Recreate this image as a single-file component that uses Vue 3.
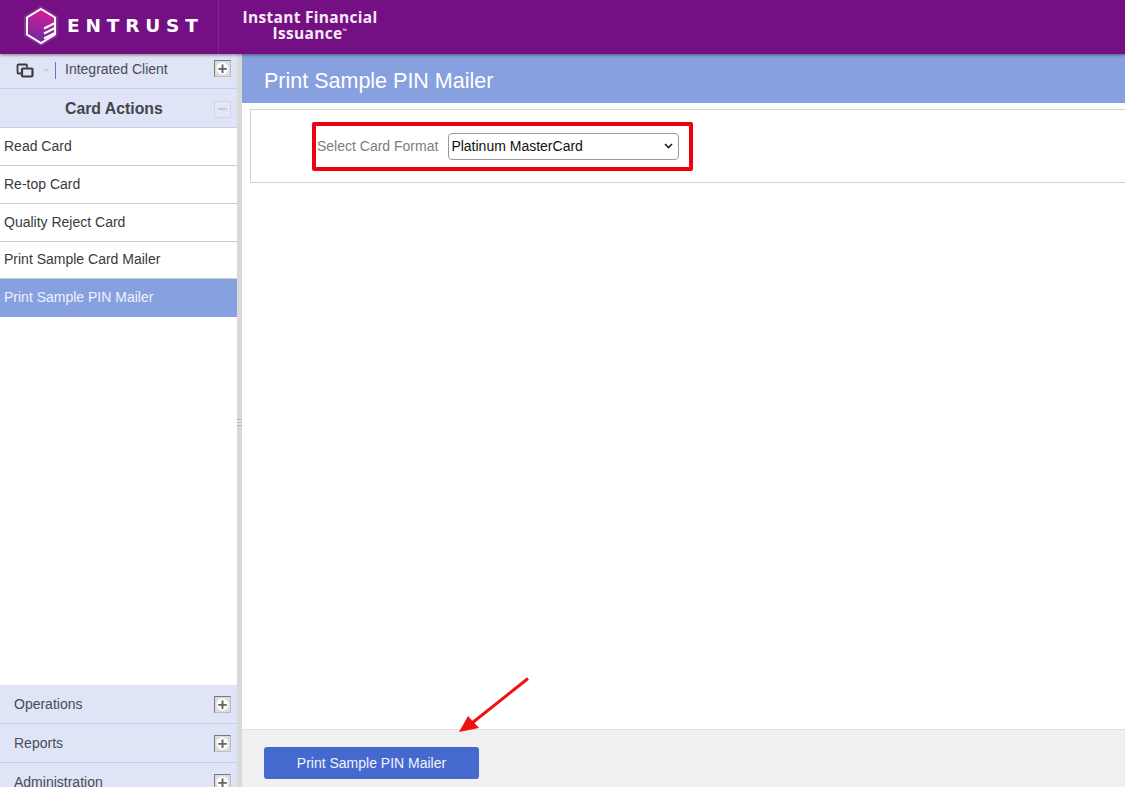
<template>
  <div class="page">
    <!-- header -->
    <header class="top-bar">
      <div class="brand">
        <svg class="logo" width="36" height="40" viewBox="0 0 36 40">
          <defs>
            <linearGradient id="hexFill" x1="0.6" y1="0" x2="0.4" y2="1">
              <stop offset="0" stop-color="#d81f96" />
              <stop offset="1" stop-color="#6a2aa0" />
            </linearGradient>
          </defs>
          <path d="M18 0 L35 10 V30 L18 40 L1 30 V10 Z" fill="#93479f" opacity="0.6" />
          <path d="M18 3 L32 11.500 V28.500 L18 37 L4 28.500 V11.500 Z" fill="url(#hexFill)" stroke="#fff" stroke-width="2" />
          <path d="M32 17 L21 22.500 M32 22 L21 27.500 M32 27 L21 32.500" stroke="#fff" stroke-width="2" fill="none" />
        </svg>
        <span class="wordmark">ENTRUST</span>
      </div>
      <div class="product">Instant Financial<br />Issuance<sup>™</sup></div>
    </header>

    <div class="body-row">
      <!-- left menu -->
      <aside class="sidebar">
        <div class="client-row">
          <svg class="windows-icon" width="18" height="15" viewBox="0 0 18 15">
            <path d="M5.500 10.500 H2.500 A1 1 0 0 1 1.500 9.500 V2.500 A1 1 0 0 1 2.500 1.500 H10 A1 1 0 0 1 11 2.500 V4.500" fill="none" stroke="#3c3c3c" stroke-width="1.800" />
            <rect x="6" y="5.500" width="10.500" height="8" rx="1" fill="none" stroke="#3c3c3c" stroke-width="2.200" />
          </svg>
          <span class="caret"></span>
          <span class="divider"></span>
          <span class="client-name">Integrated Client</span>
          <span class="toggle">+</span>
        </div>
        <div class="section-title">
          <span>Card Actions</span>
          <span class="toggle disabled">−</span>
        </div>
        <a
          v-for="item in actions"
          :key="item"
          class="menu-item"
          :class="{ active: item === selected }"
        >{{ item }}</a>
        <div class="spacer"></div>
        <div class="groups">
          <div v-for="group in groups" :key="group" class="group-row">
            <span>{{ group }}</span>
            <span class="toggle">+</span>
          </div>
        </div>
      </aside>

      <div class="splitter"><span class="grip"></span></div>

      <!-- content -->
      <main class="content">
        <h1 class="page-title">Print Sample PIN Mailer</h1>
        <section class="panel">
          <div class="field">
            <label class="field-label">Select Card Format</label>
            <div class="select-box">
              <span>Platinum MasterCard</span>
              <svg width="9" height="6" viewBox="0 0 9 6">
                <path d="M1 1 L4.500 4.500 L8 1" fill="none" stroke="#222" stroke-width="1.700" />
              </svg>
            </div>
            <div class="callout"></div>
          </div>
        </section>
        <div class="spacer"></div>
        <footer class="footer">
          <button class="primary-btn">Print Sample PIN Mailer</button>
          <svg class="arrow" width="80" height="64" viewBox="0 0 80 64">
            <path d="M69 1.500 L13 46" stroke="#ee1111" stroke-width="3" fill="none" />
            <path d="M0 55 L9 39 L20 51 Z" fill="#ee1111" />
          </svg>
        </footer>
      </main>
    </div>
  </div>
</template>

<script setup>
const actions = [
  "Read Card",
  "Re-top Card",
  "Quality Reject Card",
  "Print Sample Card Mailer",
  "Print Sample PIN Mailer",
];
const selected = "Print Sample PIN Mailer";
const groups = ["Operations", "Reports", "Administration"];
</script>

<style>
html,
body {
  margin: 0;
  overflow: hidden;
}
</style>

<style scoped>
.page {
  width: 1125px;
  height: 787px;
  overflow: hidden;
  display: flex;
  flex-direction: column;
  font-family: "Liberation Sans", Arial, sans-serif;
  background: #fff;
}

.top-bar {
  height: 54px;
  flex: none;
  display: flex;
  align-items: center;
  background: #751084;
  box-shadow: 0 1px 3px rgba(0, 0, 0, 0.45);
  position: relative;
  z-index: 2;
}

.brand {
  width: 219px;
  height: 100%;
  box-sizing: border-box;
  padding: 0 0 3px 23px;
  display: flex;
  align-items: center;
  gap: 8px;
  border-right: 1px solid #7f2a8c;
}

.logo {
  flex: none;
}

.wordmark {
  font-family: "DejaVu Sans", sans-serif;
  font-size: 18.5px;
  font-weight: 700;
  letter-spacing: 5.8px;
  color: #fff;
}

.product {
  width: 182px;
  margin-top: -5px;
  text-align: center;
  font-family: "Open Sans", sans-serif;
  font-size: 15.5px;
  font-weight: 700;
  letter-spacing: 0.3px;
  line-height: 16px;
  color: #f6ecf7;
}

.product sup {
  font-size: 6px;
  line-height: 0;
}

.body-row {
  flex: 1;
  min-height: 0;
  display: flex;
}

.sidebar {
  width: 237px;
  flex: none;
  display: flex;
  flex-direction: column;
  font-size: 14px;
  color: #4a4d55;
}

.client-row {
  height: 35px;
  flex: none;
  display: flex;
  align-items: center;
  padding: 0 6px 5px 16px;
  box-sizing: border-box;
  background: #dfe4f6;
  border-bottom: 1px solid #c3cfe9;
}

.windows-icon {
  flex: none;
  margin-top: 3px;
}

.caret {
  width: 0;
  height: 0;
  margin: 4px 0 0 9px;
  border-left: 3px solid transparent;
  border-right: 3px solid transparent;
  border-top: 3px solid #c9d0e4;
}

.divider {
  width: 1px;
  height: 17px;
  margin: 3px 9px 0 6px;
  background: #5b7db5;
}

.client-name {
  flex: 1;
}

.toggle {
  width: 17px;
  height: 17px;
  flex: none;
  display: flex;
  align-items: center;
  justify-content: center;
  box-sizing: border-box;
  border: 1px solid;
  border-color: #77797f #bdbdbd #bdbdbd #77797f;
  background: radial-gradient(circle, #fff 5px, #dcdcdc 7px);
  font-size: 17px;
  font-weight: 700;
  line-height: 1;
  color: #666;
}

.toggle.disabled {
  border-color: #cfd4e2;
  background: #e4e8f6;
  color: #c3c8d4;
}

.section-title {
  height: 39px;
  flex: none;
  box-sizing: border-box;
  padding: 2px 6px 0 65px;
  display: flex;
  align-items: center;
  justify-content: space-between;
  background: #dfe4f6;
  border-bottom: 1px solid #c3cfe9;
  font-size: 15.8px;
  font-weight: 700;
  color: #43454c;
}

.menu-item {
  height: 38px;
  flex: none;
  box-sizing: border-box;
  padding: 0 0 2px 4px;
  display: flex;
  align-items: center;
  border-bottom: 1px solid #c9cedb;
  color: #3a3a3a;
}

.menu-item:nth-of-type(4) {
  height: 37px;
}

.menu-item.active {
  background: #87a0e0;
  color: #eef2fb;
  border-bottom-color: #87a0e0;
}

.spacer {
  flex: 1;
}

/* 最后一行被窗口裁掉 */
.groups {
  height: 102px;
  flex: none;
  overflow: hidden;
}

.group-row {
  height: 39px;
  box-sizing: border-box;
  padding: 0 6px 0 14px;
  display: flex;
  align-items: center;
  justify-content: space-between;
  background: #dfe4f6;
  border-bottom: 1px solid #c3cfe9;
}

.splitter {
  width: 5px;
  flex: none;
  display: flex;
  align-items: center;
  justify-content: center;
  background: #d9d9d9;
}

.grip {
  width: 5px;
  height: 7px;
  margin-top: 3px;
  background: repeating-linear-gradient(#b5b5b5 0 1px, #e2e2e2 1px 3px);
}

.content {
  flex: 1;
  min-width: 0;
  display: flex;
  flex-direction: column;
}

.page-title {
  height: 49px;
  flex: none;
  margin: 0;
  padding: 5px 0 0 22px;
  box-sizing: border-box;
  display: flex;
  align-items: center;
  background: #87a0e0;
  font-size: 21.5px;
  font-weight: 400;
  color: #fff;
}

.panel {
  height: 74px;
  flex: none;
  box-sizing: border-box;
  margin: 6px 0 0 8px;
  padding-left: 66px;
  display: flex;
  align-items: center;
  border: 1px solid #d2d2d2;
  border-right: none;
}

.field {
  position: relative;
  display: flex;
  align-items: center;
  gap: 10px;
}

.field-label {
  font-size: 14px;
  color: #7a7d84;
}

.select-box {
  width: 231px;
  height: 27px;
  box-sizing: border-box;
  padding: 0 5px 0 2px;
  display: flex;
  align-items: center;
  justify-content: space-between;
  border: 1px solid #9a9a9a;
  border-radius: 4px;
  font-size: 14px;
  color: #111;
}

.callout {
  position: absolute;
  left: -5px;
  top: -11px;
  width: 381px;
  height: 49px;
  box-sizing: border-box;
  border: 4px solid #ee0010;
  border-radius: 2px;
}

.footer {
  height: 58px;
  flex: none;
  box-sizing: border-box;
  padding-left: 22px;
  display: flex;
  align-items: flex-start;
  position: relative;
  background: #f0f0f0;
  border-top: 1px solid #e0e0e0;
}

.primary-btn {
  width: 215px;
  height: 32px;
  margin-top: 17px;
  border: none;
  border-radius: 3px;
  background: #4569cf;
  font-family: inherit;
  font-size: 14px;
  color: #f2f5fd;
}

.arrow {
  position: absolute;
  left: 217px;
  top: -53px;
}
</style>
